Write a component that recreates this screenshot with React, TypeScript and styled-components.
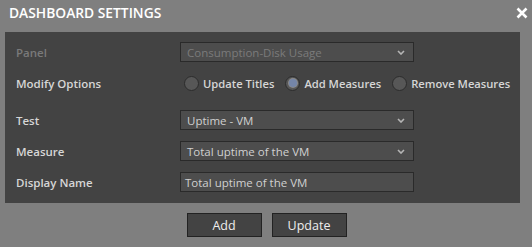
import React from "react";
import styled, { createGlobalStyle } from "styled-components";

const Global = createGlobalStyle`
  html, body { margin: 0; padding: 0; background: #7f7f7f; }
  body { font-family: "Open Sans", "Noto Sans", sans-serif; }
  * { box-sizing: border-box; }
`;

const Dialog = styled.div`
  width: 532px;
  height: 247px;
  background: #7f7f7f;
  display: flex;
  flex-direction: column;
`;

const Header = styled.div`
  height: 32px;
  display: flex;
  align-items: center;
  justify-content: space-between;
  padding: 0 3px 0 9px;
`;

const Title = styled.div`
  color: #ffffff;
  font-size: 13.8px;
  font-weight: 600;
  margin-top: -7px;
`;

const Close = styled.div`
  width: 14px;
  height: 14px;
  margin-top: -6px;
  display: flex;
  align-items: center;
  justify-content: center;
`;

const Panel = styled.div`
  margin: 0 12px 0 5px;
  height: 171px;
  background: #434343;
  padding: 10px 0 0 11px;
  display: flex;
  flex-direction: column;
  gap: 11px;
`;

const Row = styled.div<{ $extra?: number }>`
  display: flex;
  align-items: center;
  height: 20px;
  margin-bottom: ${(p) => p.$extra ?? 0}px;
`;

const Label = styled.div<{ $disabled?: boolean }>`
  width: 164px;
  font-size: 11.5px;
  font-weight: 600;
  color: ${(p) => (p.$disabled ? "#7a7a7a" : "#d6d6d6")};
`;

const SelectBox = styled.div<{ $disabled?: boolean }>`
  width: 234px;
  height: 20px;
  background: #4d4d4d;
  border: 1px solid #2a2a2a;
  display: flex;
  align-items: center;
  justify-content: space-between;
  padding: 0 8px 0 6px;
  font-size: 11.5px;
  color: ${(p) => (p.$disabled ? "#7b7b7b" : "#d0d0d0")};
`;

const TextInput = styled.div`
  width: 234px;
  height: 20px;
  background: #4d4d4d;
  border: 1px solid #2a2a2a;
  display: flex;
  align-items: center;
  padding: 0 4px;
  font-size: 11.5px;
  color: #d0d0d0;
`;

const Radios = styled.div`
  display: flex;
  align-items: center;
  gap: 11px;
  margin-left: 4px;
`;

const RadioItem = styled.div`
  display: flex;
  align-items: center;
  gap: 4px;
  font-size: 11.2px;
  font-weight: 600;
  color: #d6d6d6;
`;

const Circle = styled.div<{ $checked?: boolean }>`
  width: 15px;
  height: 15px;
  border-radius: 50%;
  border: 1px solid #2c2c2c;
  background: #575757;
  display: flex;
  align-items: center;
  justify-content: center;
  &::after {
    content: "";
    display: ${(p) => (p.$checked ? "block" : "none")};
    width: 8px;
    height: 8px;
    border-radius: 50%;
    background: #7485a8;
    box-shadow: 0 0 0 1px #8a8a8a;
  }
`;

const Buttons = styled.div`
  display: flex;
  justify-content: center;
  gap: 10px;
  margin-top: 10px;
  padding-left: 1px;
`;

const Button = styled.button`
  width: 75px;
  height: 24px;
  background: #434343;
  border: 1px solid #222;
  color: #eeeeee;
  font-family: "Open Sans", "Noto Sans", sans-serif;
  font-size: 12.5px;
  padding: 0;
`;

const Chevron = () => (
  <svg width="8" height="5" viewBox="0 0 8 5">
    <polyline points="1,1 4,4 7,1" fill="none" stroke="#b5b5b5" strokeWidth="1.6" />
  </svg>
);

export default function App() {
  return (
    <Dialog>
      <Global />
      <Header>
        <Title>DASHBOARD SETTINGS</Title>
        <Close>
          <svg width="12" height="12" viewBox="0 0 12 12">
            <path d="M1.5 1.5 L10.5 10.5 M10.5 1.5 L1.5 10.5" stroke="#fff" strokeWidth="2.6" />
          </svg>
        </Close>
      </Header>
      <Panel>
        <Row>
          <Label $disabled>Panel</Label>
          <SelectBox $disabled>
            Consumption-Disk Usage
            <Chevron />
          </SelectBox>
        </Row>
        <Row $extra={6}>
          <Label>Modify Options</Label>
          <Radios>
            <RadioItem>
              <Circle />
              Update Titles
            </RadioItem>
            <RadioItem>
              <Circle $checked />
              Add Measures
            </RadioItem>
            <RadioItem>
              <Circle />
              Remove Measures
            </RadioItem>
          </Radios>
        </Row>
        <Row>
          <Label>Test</Label>
          <SelectBox>
            Uptime - VM
            <Chevron />
          </SelectBox>
        </Row>
        <Row>
          <Label>Measure</Label>
          <SelectBox>
            Total uptime of the VM
            <Chevron />
          </SelectBox>
        </Row>
        <Row>
          <Label>Display Name</Label>
          <TextInput>Total uptime of the VM</TextInput>
        </Row>
      </Panel>
      <Buttons>
        <Button>Add</Button>
        <Button>Update</Button>
      </Buttons>
    </Dialog>
  );
}
